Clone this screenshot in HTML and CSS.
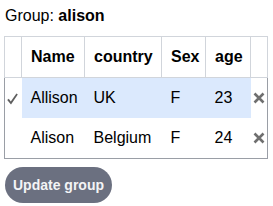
FILE: index.html
```html
<!DOCTYPE html>
<html>
<head>
<meta charset="utf-8">
<title>Group</title>
<link rel="stylesheet" href="styles.css">
</head>
<body>
  <div class="group-title">Group: <b>alison</b></div>
  <table class="members">
    <colgroup>
      <col class="c-mark"><col class="c-name"><col class="c-country"><col class="c-sex"><col class="c-age"><col class="c-mark">
    </colgroup>
    <thead>
      <tr><th></th><th>Name</th><th>country</th><th>Sex</th><th>age</th><th></th></tr>
    </thead>
    <tbody>
      <tr class="selected">
        <td class="mark check">
          <svg width="11" height="12" viewBox="0 0 11 12"><path d="M0.2 7 L1.8 5.8 L3.8 8.4 L9.4 0.4 L10.8 1.4 L4 11.6 Z" fill="#5f5f5f"/></svg>
        </td>
        <td class="hl">Allison</td><td class="hl">UK</td><td class="hl">F</td><td class="hl">23</td>
        <td class="mark"><svg width="12" height="12" viewBox="0 0 12 12"><path d="M1.5 1.5 L10.5 10.5 M10.5 1.5 L1.5 10.5" stroke="#6f6f6f" stroke-width="2.6"/></svg></td>
      </tr>
      <tr>
        <td class="mark"></td>
        <td>Alison</td><td>Belgium</td><td>F</td><td>24</td>
        <td class="mark"><svg width="12" height="12" viewBox="0 0 12 12"><path d="M1.5 1.5 L10.5 10.5 M10.5 1.5 L1.5 10.5" stroke="#6f6f6f" stroke-width="2.6"/></svg></td>
      </tr>
    </tbody>
  </table>
  <button class="update-btn">Update group</button>
</body>
</html>
```

FILE: styles.css
```css
* {
  font-family: "Liberation Sans", Arial, sans-serif;
}

body {
  margin: 0;
  padding: 7px 4px 0 5px;
  color: #000;
  background: #fff;
  font-size: 16px;
}

.group-title {
  line-height: 18px;
  margin-bottom: 11px;
}

.members {
  border-collapse: collapse;
  table-layout: fixed;
  width: 263px;
  margin-left: -1px;
}

.c-mark { width: 17px; }
.c-name { width: 63px; }
.c-country { width: 77px; }
.c-sex { width: 44px; }
.c-age { width: 45px; }

.members th {
  border: 1px solid #d1d5db;
  padding: 11px 9px;
  text-align: left;
  font-weight: bold;
  height: 18px;
}

.members tbody {
  border: 1px solid #9a9ea6;
}

.members td {
  padding: 11px 9px;
  height: 18px;
  white-space: nowrap;
}

.members td.mark {
  padding: 0;
  text-align: center;
  vertical-align: middle;
}

.members td.mark svg {
  display: block;
  margin: 0 auto;
}

.members td.check svg {
  margin: 2px 0 0 2px;
}

.members td.hl {
  background: #dbe9fd;
}

.update-btn {
  margin-top: 8px;
  background: #6b7080;
  color: #f3f4f6;
  border: none;
  border-radius: 18px;
  font-size: 14px;
  font-weight: bold;
  padding: 10px 8px;
  line-height: 16px;
  cursor: pointer;
}
```
